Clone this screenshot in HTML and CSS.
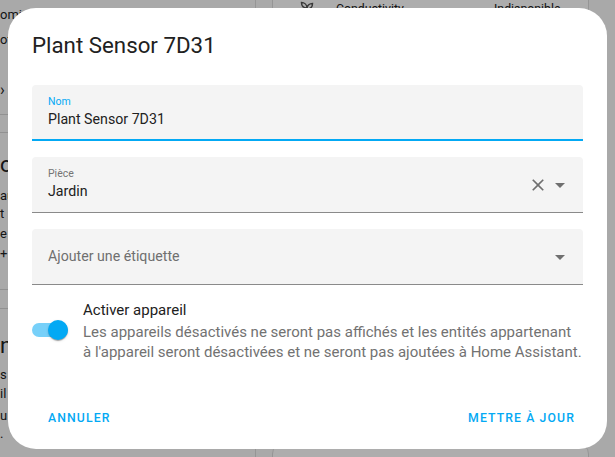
FILE: index.html
```html
<!DOCTYPE html>
<html lang="fr">
<head>
<meta charset="utf-8">
<title>Plant Sensor 7D31</title>
<link rel="stylesheet" href="styles.css">
</head>
<body>
<div class="page">
  <div class="left-col">
    <div class="frag f1">omie</div>
    <div class="frag f2">ot</div>
    <div class="frag f3">›</div>
    <hr class="divider d1">
    <hr class="divider d2">
    <div class="frag big f4">ol</div>
    <div class="frag f5">au</div>
    <div class="frag f6">t</div>
    <div class="frag f7">e</div>
    <div class="frag f8">+</div>
    <hr class="divider d3">
    <hr class="divider d4">
    <div class="frag big f9">n</div>
    <div class="frag f10">s</div>
    <div class="frag f11">il</div>
    <div class="frag f12">u</div>
    <div class="frag f13">.</div>
  </div>
  <div class="right-col">
    <div class="card card-top">
      <div class="entity-row">
        <svg class="entity-icon" viewBox="0 0 24 24"><path d="M12 20V11M12 11C12 7 9 5 6 5C6 9 8 11 12 11ZM12 12C12 8 15 6 18 6C18 10 16 12 12 12Z" fill="none" stroke="#555" stroke-width="1.6"/></svg>
        <span class="entity-name">Conductivity</span>
        <span class="entity-state">Indisponible</span>
      </div>
    </div>
    <div class="card card-bottom"></div>
  </div>
</div>
<div class="scrim"></div>

<div class="dialog" role="dialog">
  <h2 class="dialog-title">Plant Sensor 7D31</h2>
  <div class="dialog-content">
    <div class="field focused">
      <div class="field-main">
        <span class="field-label">Nom</span>
        <span class="field-value">Plant Sensor 7D31</span>
      </div>
    </div>
    <div class="field">
      <div class="field-main">
        <span class="field-label">Pièce</span>
        <span class="field-value">Jardin</span>
      </div>
      <svg class="icon-close" viewBox="0 0 24 24"><path d="M19,6.41L17.59,5L12,10.59L6.41,5L5,6.41L10.59,12L5,17.59L6.41,19L12,13.41L17.59,19L19,17.59L13.41,12L19,6.41Z"/></svg>
      <svg class="icon-arrow" viewBox="0 0 24 24"><path d="M7,10L12,15L17,10H7Z"/></svg>
    </div>
    <div class="field">
      <div class="field-main">
        <span class="field-placeholder">Ajouter une étiquette</span>
      </div>
      <svg class="icon-arrow" viewBox="0 0 24 24"><path d="M7,10L12,15L17,10H7Z"/></svg>
    </div>
    <div class="toggle-row">
      <div class="switch">
        <span class="switch-track"></span>
        <span class="switch-thumb"></span>
      </div>
      <div class="toggle-text">
        <div class="toggle-label">Activer appareil</div>
        <div class="toggle-desc">Les appareils désactivés ne seront pas affichés et les entités appartenant<br>à l'appareil seront désactivées et ne seront pas ajoutées à Home Assistant.</div>
      </div>
    </div>
  </div>
  <div class="dialog-actions">
    <button class="btn">Annuler</button>
    <button class="btn">Mettre à jour</button>
  </div>
</div>
</body>
</html>
```
FILE: styles.css
```css
* { box-sizing: border-box; }
html, body { margin: 0; padding: 0; }
body {
  width: 615px;
  height: 457px;
  overflow: hidden;
  position: relative;
  background: #fafafa;
  font-family: Roboto, "Noto Sans", sans-serif;
  color: #212121;
}

/* background page */
.page {
  display: grid;
  grid-template-columns: 256px 1fr;
  height: 457px;
  overflow: hidden;
}
.left-col {
  border-right: 1px solid #dcdcdc;
  display: flex;
  flex-direction: column;
  font-size: 13px;
  line-height: 16px;
  overflow: hidden;
}
.frag { white-space: nowrap; }
.f1 { margin-top: 7px; }
.f2 { margin-top: 9px; }
.f3 { margin-top: 34px; font-size: 16px; }
.divider { border: 0; border-top: 1px solid #d6d6d6; margin: 0; }
.d1 { margin-top: 16px; }
.d2 { margin-top: 17px; }
.big { font-size: 22px; line-height: 26px; }
.f4 { margin-top: 19px; }
.f5 { margin-top: 10px; }
.f6 { margin-top: 2px; }
.f7 { margin-top: 4px; }
.f8 { margin-top: 4px; }
.d3 { margin-top: 27px; }
.d4 { margin-top: 18px; }
.f9 { margin-top: 24px; }
.f10 { margin-top: 8px; }
.f11 { margin-top: 3px; }
.f12 { margin-top: 6px; }
.f13 { margin-top: 2px; }

.right-col {
  padding: 0 26px 0 16px;
  display: flex;
  flex-direction: column;
  overflow: hidden;
}
.card {
  border: 1px solid #dcdcdc;
  border-radius: 12px;
  background: #fff;
  flex: none;
}
.card-top {
  margin-top: -30px;
  height: 412px;
}
.entity-row {
  display: flex;
  align-items: center;
  margin-top: 28px;
  padding-left: 23px;
  font-size: 12.3px;
  height: 20px;
}
.entity-icon { width: 22px; height: 22px; }
.entity-name { margin-left: 18px; width: 158px; }
.card-bottom {
  margin-top: 60px;
  height: 40px;
}

.scrim {
  position: absolute;
  inset: 0;
  background: rgba(0, 0, 0, 0.32);
}

/* dialog */
.dialog {
  position: absolute;
  left: 8px;
  top: 8px;
  width: 599px;
  height: 441px;
  background: #fff;
  border-radius: 28px;
  display: flex;
  flex-direction: column;
}
.dialog-title {
  margin: 0;
  padding: 23px 24px 0 24px;
  font-size: 22.3px;
  line-height: 28px;
  font-weight: 400;
  color: #212121;
}
.dialog-content {
  padding: 26px 24px 0 24px;
  display: flex;
  flex-direction: column;
  gap: 16px;
}
.field {
  height: 56px;
  background: #f4f4f4;
  border-radius: 4px 4px 0 0;
  border-bottom: 1px solid #8a8a8a;
  display: flex;
  align-items: center;
  padding: 0 11px 0 16px;
}
.field.focused {
  border-bottom: 2px solid #03a9f4;
}
.field-main {
  flex: 1;
  display: flex;
  flex-direction: column;
  justify-content: center;
  padding-bottom: 1px;
}
.field-label {
  font-size: 10.5px;
  line-height: 14px;
  color: #757575;
}
.focused .field-label { color: #03a9f4; }
.field-value {
  font-size: 14.2px;
  line-height: 20px;
  color: #212121;
}
.field-placeholder {
  font-size: 14.2px;
  line-height: 20px;
  color: #6f6f6f;
}
.icon-close { width: 20px; height: 20px; fill: #6f6f6f; }
.icon-arrow { width: 24px; height: 24px; fill: #6f6f6f; }

.toggle-row {
  margin-top: -3px;
  display: flex;
  align-items: center;
}
.switch {
  position: relative;
  width: 36px;
  height: 20px;
  flex: none;
  margin-right: 15px;
}
.switch-track {
  position: absolute;
  left: 0;
  top: 3px;
  width: 36px;
  height: 14px;
  border-radius: 7px;
  background: #03a9f4;
  opacity: 0.54;
}
.switch-thumb {
  position: absolute;
  right: 0;
  top: 0;
  width: 20px;
  height: 20px;
  border-radius: 50%;
  background: #03a9f4;
  box-shadow: 0 2px 1px -1px rgba(0,0,0,.2), 0 1px 1px 0 rgba(0,0,0,.14), 0 1px 3px 0 rgba(0,0,0,.12);
}
.toggle-text {
  flex: 1;
  margin-right: -12px;
}
.toggle-label {
  font-size: 15px;
  line-height: 24px;
  color: #212121;
}
.toggle-desc {
  font-size: 15px;
  line-height: 20px;
  color: #727272;
  white-space: nowrap;
}

.dialog-actions {
  margin-top: auto;
  padding: 0 24px 13px 32px;
  display: flex;
  justify-content: space-between;
}
.btn {
  height: 36px;
  padding: 0 8px;
  border: 0;
  background: transparent;
  font-family: Roboto, sans-serif;
  font-size: 12.25px;
  font-weight: 500;
  letter-spacing: 1.1px;
  text-transform: uppercase;
  color: #03a9f4;
}
```
